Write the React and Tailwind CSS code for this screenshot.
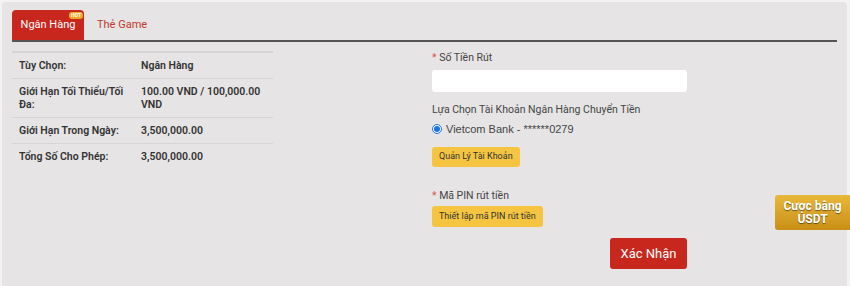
export default function App() {
  const rows = [
    ["Tùy Chọn:", "Ngân Hàng"],
    ["Giới Hạn Tối Thiểu/Tối Đa:", "100.00 VND / 100,000.00 VND"],
    ["Giới Hạn Trong Ngày:", "3,500,000.00"],
    ["Tổng Số Cho Phép:", "3,500,000.00"],
  ];
  return (
    <div className="relative h-[286px] w-[850px] overflow-hidden bg-[#f3f3f3] pl-[2px] pr-[3px] pt-[2px] font-['Roboto',sans-serif] text-[#333]">
      <div className="h-[300px] rounded-t-[4px] bg-[#e6e4e4] px-[10px] pt-[8px]">
        <div className="flex items-end border-b-2 border-[#555] pr-[2px]">
          <div className="relative flex h-[30px] w-[72px] items-center justify-center rounded-t-[4px] bg-[#c8271d] text-[11px] text-white">
            Ngân Hàng
            <span className="absolute right-[1px] top-[2px] rounded-[3px] bg-[#f0a928] px-[2px] text-[5px] font-bold leading-[7px] text-white">
              HOT
            </span>
          </div>
          <div className="flex h-[30px] items-center px-[13px] text-[11px] text-[#c0392b]">Thẻ Game</div>
        </div>

        <div className="flex items-start pt-[9px]">
          <table className="w-[261px] border-t-2 border-[#d6d4d4] text-[10.5px] font-semibold text-[#333]">
            <tbody>
              {rows.map((r, i) => (
                <tr key={i} className="border-t border-[#d6d4d4] align-top first:border-t-0">
                  <td className="w-[129px] py-[6px] pl-[7px] pr-[6px] leading-[13px]">{r[0]}</td>
                  <td className="py-[6px] pr-[10px] leading-[13px]">{r[1]}</td>
                </tr>
              ))}
            </tbody>
          </table>

          <div className="ml-[159px] w-[255px] text-[10.5px] text-[#444]">
            <div className="leading-[14px]">
              <span className="text-[#d9534f]">* </span>Số Tiền Rút
            </div>
            <input className="mt-[5px] block h-[22px] w-[255px] rounded-[3px] bg-white outline-none" />
            <div className="mt-[11px] leading-[14px]">Lựa Chọn Tài Khoản Ngân Hàng Chuyển Tiền</div>
            <label className="mt-[5px] flex h-[14px] items-center gap-[4px] font-['Liberation_Sans',sans-serif] text-[11px]">
              <input type="radio" defaultChecked className="m-0 h-[10px] w-[10px] accent-[#1a73e8]" />
              Vietcom Bank - ******0279
            </label>
            <button className="mt-[11px] h-[20px] rounded-[3px] bg-[#f5c542] px-[7px] text-[9px] text-[#333]">
              Quản Lý Tài Khoản
            </button>
            <div className="mt-[22px] leading-[14px]">
              <span className="text-[#d9534f]">* </span>Mã PIN rút tiền
            </div>
            <button className="mt-[3px] h-[21px] rounded-[3px] bg-[#f5c542] px-[7px] text-[9px] text-[#333]">
              Thiết lập mã PIN rút tiền
            </button>
            <div className="mt-[11px] flex justify-end">
              <button className="h-[31px] w-[77px] rounded-[3px] bg-[#c8271d] text-[13px] text-white">Xác Nhận</button>
            </div>
          </div>
        </div>
      </div>

      <div className="absolute right-0 top-[195px] flex h-[35px] w-[75px] flex-col items-center justify-center rounded-l-[3px] bg-gradient-to-b from-[#e8b83a] to-[#c98f14] text-[12px] font-bold leading-[13px] text-white [text-shadow:0_1px_1px_rgba(0,0,0,0.5)]">
        <span>Cược bằng</span>
        <span>USDT</span>
      </div>
    </div>
  );
}
